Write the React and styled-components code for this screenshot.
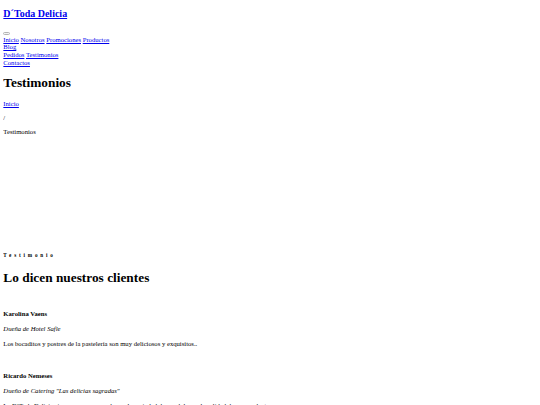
import React from 'react';
import styled, { createGlobalStyle } from 'styled-components';

const GlobalStyle = createGlobalStyle`
    body {
        margin: 3.33px;
        font-family: "Liberation Serif", "Times New Roman", serif;
        font-size: 6.667px;
        line-height: 1.15;
        color: #000;
        background: #fff;
    }
`;

const navRows = [
    ['Inicio', 'Nosotros', 'Promociones', 'Productos'],
    ['Blog'],
    ['Pedidos', 'Testimonios'],
    ['Contactos'],
];

const testimonials = [
    {
        name: 'Karolina Vaens',
        role: 'Dueña de Hotel Safle',
        quote: 'Los bocaditos y postres de la pastelería son muy deliciosos y exquisitos..',
    },
    {
        name: 'Ricardo Nemeses',
        role: 'Dueño de Catering "Las delicias sagradas"',
        quote: 'La D´Toda Delicia siempre nos sorprende con la variedad de sus dulces y la calidad de sus productos.',
    },
];

export default function App() {
    return (
        <>
            <GlobalStyle />
            <header>
                <Brand><Link href="#">D´Toda Delicia</Link></Brand>
                <MenuToggle type="button" aria-label="menu" />
                <nav>
                    {navRows.map((row, i) => (
                        <NavRow key={i}>
                            {row.map((item, j) => (
                                <React.Fragment key={item}>
                                    {j > 0 && ' '}
                                    <Link href="#">{item}</Link>
                                </React.Fragment>
                            ))}
                        </NavRow>
                    ))}
                </nav>
            </header>

            <PageTitle>Testimonios</PageTitle>
            <Crumb><Link href="#">Inicio</Link></Crumb>
            <Crumb>/</Crumb>
            <Crumb>Testimonios</Crumb>

            <Section>
                <Eyebrow>Testimonio</Eyebrow>
                <SectionTitle>Lo dicen nuestros clientes</SectionTitle>
                {testimonials.map((t) => (
                    <Card key={t.name}>
                        <Name>{t.name}</Name>
                        <Role>{t.role}</Role>
                        <Quote>{t.quote}</Quote>
                    </Card>
                ))}
            </Section>
        </>
    );
}

const Link = styled.a`
    color: #0000ee;
    text-decoration: underline;
`;

const Brand = styled.h2`
    font-size: 10px;
    line-height: 1.15;
    font-weight: bold;
    margin: 5px 0 8.3px;
`;

const MenuToggle = styled.button`
    display: inline-block;
    box-sizing: border-box;
    width: 7px;
    height: 3px;
    padding: 0;
    border: 1px solid #b4b4b4;
    border-radius: 1.5px;
    background: #f4f4f4;
    vertical-align: baseline;
`;

const NavRow = styled.div`
    line-height: 1.15;
`;

const PageTitle = styled.h1`
    font-size: 13.33px;
    line-height: 1.15;
    margin: 8.93px 0;
`;

const Crumb = styled.p`
    margin: 6.67px 0;
`;

const Section = styled.section`
    padding-top: 110.1px;
`;

const Eyebrow = styled.h6`
    font-size: 5.2px;
    line-height: 1.15;
    font-weight: bold;
    letter-spacing: 2.8px;
    margin: 0 0 11.3px;
`;

const SectionTitle = styled.h2`
    font-size: 13.33px;
    line-height: 1.15;
    font-weight: bold;
    margin: 0;
`;

const Card = styled.article`
    padding-top: 24.4px;
`;

const Name = styled.h4`
    font-size: 6.667px;
    line-height: 1.15;
    font-weight: bold;
    margin: 0 0 8px;
`;

const Role = styled.p`
    font-style: italic;
    margin: 0 0 6.67px;
`;

const Quote = styled.p`
    margin: 0;
`;
